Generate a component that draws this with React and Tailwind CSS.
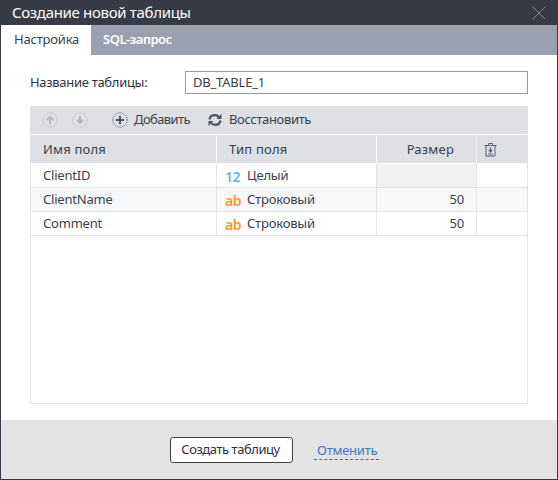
import React from "react";
import { X } from "lucide-react";

const font = "font-['Noto_Sans',sans-serif]";

function RoundIcon({ dark, children }) {
  return (
    <svg width="16" height="16" viewBox="0 0 16 16" className="shrink-0">
      <circle cx="8" cy="8" r="7.2" fill="none" stroke={dark ? "#4b5160" : "#b4b8c0"} strokeWidth="1" strokeDasharray="1 1" />
      {children}
    </svg>
  );
}

function Row({ name, typeIcon, iconClass, type, size, striped, disabled }) {
  return (
    <div className={`flex h-6 border-b border-[#e2e3e6] text-[13px] tracking-[-0.2px] text-[#3b3f4a] ${striped ? "bg-[#f6f7f9]" : "bg-white"}`}>
      <div className="w-[186px] pl-3 border-r border-[#e2e3e6] leading-[22px]">{name}</div>
      <div className="w-[160px] pl-2 border-r border-[#e2e3e6] flex items-center">
        <span className={`w-[22px] font-semibold text-[14px] tracking-[-0.5px] mt-px ${iconClass}`}>{typeIcon}</span>
        <span>{type}</span>
      </div>
      <div className={`w-[100px] pr-[12px] border-r border-[#e2e3e6] text-right leading-[22px] ${disabled ? "bg-[#f0f1f3]" : ""}`}>{size}</div>
      <div className="flex-1" />
    </div>
  );
}

export default function App() {
  return (
    <div className={`${font} w-[558px] h-[480px] flex flex-col bg-white border-x border-b border-[#383b45]`}>
      <div className="h-[25px] -mx-px bg-[#383b45] flex items-center justify-between pl-3 pr-[7px] shrink-0">
        <span className="text-white text-[15px] tracking-[-0.32px] leading-[25px]">Создание новой таблицы</span>
        <X size={24} strokeWidth={1} className="text-[#83868e]" />
      </div>

      <div className="h-[30px] bg-[#9ba0ae] flex shrink-0">
        <div className="w-[90px] bg-white flex items-center pl-[13px] text-[13px] tracking-[-0.2px] text-[#3b3f4a]">Настройка</div>
        <div className="pl-3 flex items-center text-[13px] tracking-[-0.5px] font-semibold text-white">SQL-запрос</div>
      </div>

      <div className="flex-1 flex flex-col pt-4 pl-[29px] pr-[29px] pb-4 min-h-0">
        <div className="flex items-center h-[23px] shrink-0">
          <span className="w-[155px] text-[13px] tracking-[-0.3px] text-[#2f323b]">Название таблицы:</span>
          <div className="flex-1 h-[23px] border border-[#999] flex items-center pl-[7px] text-[13px] tracking-[-0.2px] text-[#3b3f4a]">DB_TABLE_1</div>
        </div>

        <div className="mt-3 flex-1 flex flex-col border-x border-b border-[#e2e3e6] min-h-0">
          <div className="h-[28px] -mx-px bg-[#dee0e4] flex items-center pl-3 text-[13px] tracking-[-0.35px] text-[#3b3f4a] shrink-0">
            <RoundIcon>
              <path d="M8 12V5M5 8l3-3 3 3" fill="none" stroke="#b4b8c0" strokeWidth="2" />
            </RoundIcon>
            <span className="ml-[14px]">
              <RoundIcon>
                <path d="M8 4v7M5 8l3 3 3-3" fill="none" stroke="#b4b8c0" strokeWidth="2" />
              </RoundIcon>
            </span>
            <span className="ml-6">
              <RoundIcon dark>
                <path d="M8 4v8M4 8h8" fill="none" stroke="#4b5160" strokeWidth="2" />
              </RoundIcon>
            </span>
            <span className="ml-[6px] tracking-[-0.6px]">Добавить</span>
            <svg width="14" height="14" viewBox="0 0 14 14" className="ml-[18px]">
              <path d="M1.5 6.5C2 3.500 4.500 2.200 6.800 2.200c1.700 0 3.200.7 4.200 2" fill="none" stroke="#4b5160" strokeWidth="2.200" />
              <path d="M13.500 1v5H8.500z" fill="#4b5160" />
              <path d="M12.500 7.500C12 10.500 9.500 11.800 7.200 11.800c-1.700 0-3.200-.7-4.200-2" fill="none" stroke="#4b5160" strokeWidth="2.200" />
              <path d="M.5 13V8h5z" fill="#4b5160" />
            </svg>
            <span className="ml-[7px]">Восстановить</span>
          </div>

          <div className="h-[28px] mt-px -mx-px bg-[#dee0e4] flex text-[13px] tracking-[0.2px] text-[#3b3f4a] shrink-0 leading-[28px]">
            <div className="w-[187px] pl-[13px] border-r border-[#f4f5f6]">Имя поля</div>
            <div className="w-[160px] pl-[12px] border-r border-[#f4f5f6]">Тип поля</div>
            <div className="w-[100px] pr-[22px] border-r border-[#f4f5f6] text-right">Размер</div>
            <div className="flex-1 flex items-center pl-[7px]">
              <svg width="13" height="15" viewBox="0 0 13 15">
                <path d="M.5 3.500h12M4.500 3V1.500h4V3M2 3.500v10.500h9V3.500" fill="none" stroke="#5b6272" strokeWidth="1" />
                <path d="M6.500 5.500v3" stroke="#5b6272" strokeWidth="1.500" />
                <path d="M4 8h5l-2.500 3z" fill="#5b6272" />
                <path d="M4 12h5" stroke="#5b6272" strokeWidth="1" />
              </svg>
            </div>
          </div>

          <div className="mt-px">
            <Row name="ClientID" typeIcon="12" iconClass="text-[#6fb1e3]" type="Целый" disabled />
            <Row name="ClientName" typeIcon="ab" iconClass="text-[#f39a2b]" type="Строковый" size="50" striped />
            <Row name="Comment" typeIcon="ab" iconClass="text-[#f39a2b]" type="Строковый" size="50" />
          </div>
        </div>
      </div>

      <div className="h-[59px] bg-[#e3e3e3] flex items-center shrink-0 pl-[169px]">
        <button className="w-[123px] h-[26px] pr-[2px] bg-white border border-[#444] rounded-[3px] text-[13px] tracking-[-0.45px] text-[#2f323b]">Создать таблицу</button>
        <a className="ml-[21px] mt-[2px] px-[3px] w-[65px] text-[13px] tracking-[-0.25px] leading-[18px] text-[#3a7cc4] border-b border-dashed border-[#2a6fb8]">Отменить</a>
      </div>
    </div>
  );
}
